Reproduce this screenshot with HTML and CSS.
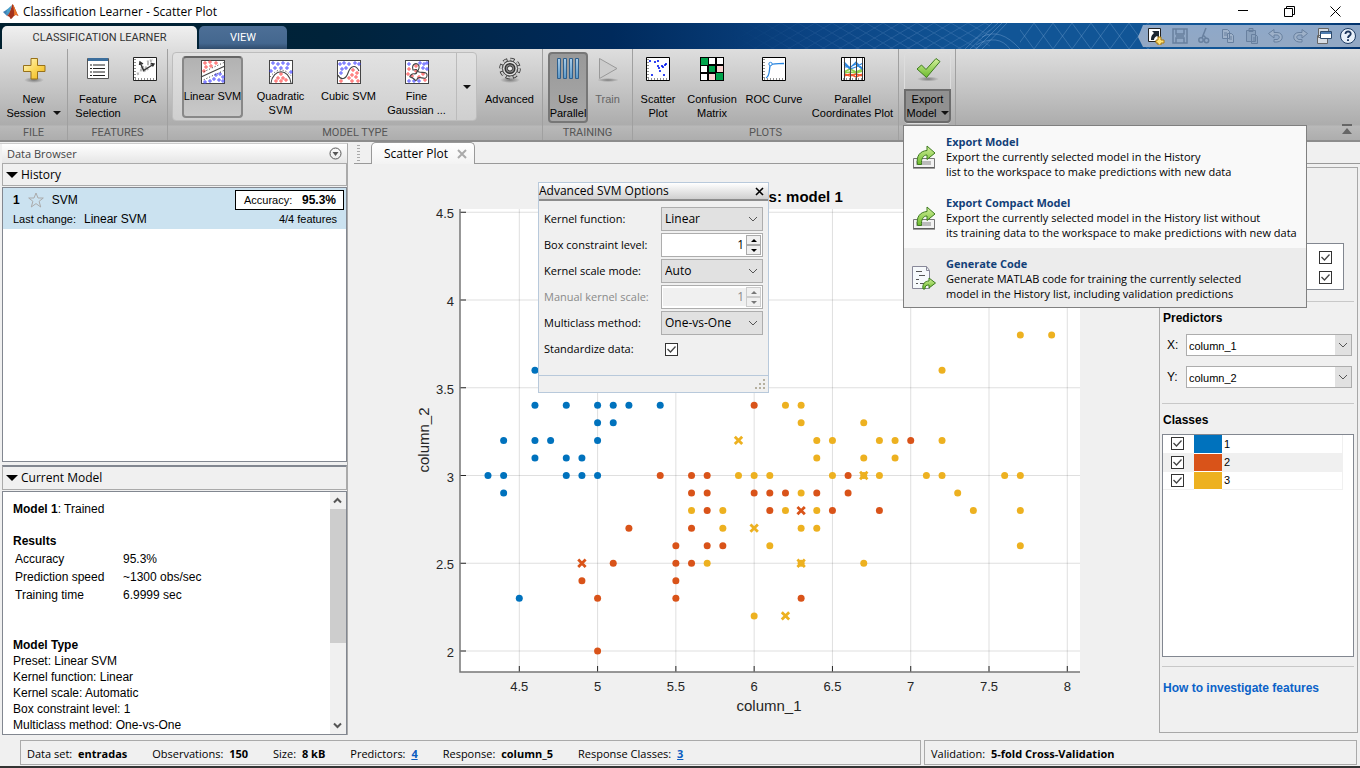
FILE: index.html
```html
<!DOCTYPE html>
<html lang="en">
<head>
<meta charset="utf-8">
<title>Classification Learner - Scatter Plot</title>
<link rel="stylesheet" href="styles.css">
</head>
<body>
<svg class="defs" aria-hidden="true">
  <defs>
    <linearGradient id="gold" x1="0" y1="0" x2="1" y2="1"><stop offset="0" stop-color="#fffbd0"/><stop offset=".5" stop-color="#fbd85c"/><stop offset="1" stop-color="#eeb211"/></linearGradient>
    <linearGradient id="green" x1="0" y1="0" x2="0" y2="1"><stop offset="0" stop-color="#d3f09b"/><stop offset="1" stop-color="#6cbb2c"/></linearGradient>
    <linearGradient id="bar" x1="0" y1="0" x2="0" y2="1"><stop offset="0" stop-color="#a9cdea"/><stop offset="1" stop-color="#5b97c6"/></linearGradient>
    <radialGradient id="shade"><stop offset="0" stop-color="#000" stop-opacity=".4"/><stop offset="1" stop-color="#000" stop-opacity="0"/></radialGradient>
    <pattern id="net" width="19" height="26" patternUnits="userSpaceOnUse"><path d="M0 0L19 26M19 0L0 26" stroke="#8fb5df" stroke-opacity=".28" fill="none"/></pattern>
    <pattern id="mesh" width="17" height="10" patternUnits="userSpaceOnUse"><path d="M0 0L17 10M17 0L0 10" stroke="#8fb5df" stroke-opacity=".2" fill="none"/></pattern>
    <linearGradient id="fade"><stop offset="0" stop-color="#000"/><stop offset=".7" stop-color="#fff"/></linearGradient>
    <mask id="fademask"><rect width="260" height="26" fill="url(#fade)"/></mask>
  </defs>
</svg>

<header class="titlebar">
  <svg class="logo" width="17" height="17" viewBox="0 0 17 17"><path d="M1 9l5-3 3 2-4 5z" fill="#3e7fb5"/><path d="M5 6.500L10 2l-2 7-4 3z" fill="#4b9fc9"/><path d="M5 13C8 11 9 5 10.500 1c1.500 1 3.500 8 6 12-2-1-3-1.500-4.500 0-1.500 1.500-2 3-3.500 3-.5-2-1.500-3-3.500-3z" fill="#a3321c"/><path d="M10.500 1c1.500 1 3.500 8 6 12-2-1-3-1.500-4.500 0 .5-4-.5-9-1.500-12z" fill="#e8742a"/></svg>
  <h1>Classification Learner - Scatter Plot</h1>
  <div class="window-buttons">
    <button aria-label="Minimize"><svg width="11" height="11"><path d="M0 4.500h10" stroke="#000"/></svg></button>
    <button aria-label="Restore"><svg width="11" height="11" fill="none" stroke="#000"><path d="M.5 2.500h8v8h-8zM2.500 2.500v-2h8v8h-2"/></svg></button>
    <button aria-label="Close"><svg width="11" height="11" stroke="#000"><path d="M.5.5l10 10M10.500.5l-10 10"/></svg></button>
  </div>
</header>

<nav class="banner">
  <button class="tab tab-active">CLASSIFICATION LEARNER</button>
  <button class="tab">VIEW</button>
  <svg class="banner-art" width="430" height="26" aria-hidden="true">
    <rect width="260" height="26" fill="url(#mesh)" mask="url(#fademask)"/>
    <rect x="290" width="140" height="26" fill="url(#net)"/>
    <path d="M240 26L268 0M246 26L272 0M252 26L277 0M235 26L262 0M252 14q18-10 38 12M246 22q22-12 34 4" fill="none" stroke="#8fb5df" stroke-opacity=".35"/>
  </svg>
  <div class="quick">
    <button aria-label="Shortcut"><svg width="18" height="18" viewBox="0 0 18 18"><path d="M1.500 1.500h12v13h-12z" fill="#fff" stroke="#222"/><path d="M4 13c0-4 1-5 3-7L5 4h7v7l-2-2c-2 1-3 2-3 4z" fill="#1c2530"/><path d="M11 10h3v3h3v3h-3v2h-3v-2H9v-3h2z" fill="#ffe277" stroke="#a97910"/></svg></button>
    <button aria-label="Save" disabled><svg width="18" height="18" viewBox="0 0 18 18" fill="none" stroke="#68809f" stroke-width="1.500"><path d="M2 2h14v14H2zM5 2v5h8V2M5 16v-5h8v5M5 9h8"/></svg></button>
    <button aria-label="Cut" disabled><svg width="18" height="18" viewBox="0 0 18 18" fill="none" stroke="#68809f" stroke-width="1.500"><path d="M11 1L7 11M8 8l3 3"/><circle cx="6" cy="13" r="2.200"/><circle cx="11.500" cy="13.500" r="2.200"/></svg></button>
    <button aria-label="Copy" disabled><svg width="18" height="18" viewBox="0 0 18 18" fill="#9eb1c9" stroke="#68809f"><path d="M3.500 2.500h5l2 2v7h-7zM8.500 6.500h4l2 2v7h-6z"/><path d="M5 6h3M5 8h3M10 10h3M10 12h3"/></svg></button>
    <button aria-label="Paste" disabled><svg width="18" height="18" viewBox="0 0 18 18" fill="#8aa1bd" stroke="#68809f"><path d="M3.500 3.500h9v11h-9zM6 1.500h4v3H6zM8.500 7.500h4l2 2v7h-6z"/><path d="M10 11h3M10 13h3"/></svg></button>
    <button aria-label="Undo" disabled><svg width="18" height="18" viewBox="0 0 18 18" fill="#9eb1c9" stroke="#68809f"><path d="M7 2.500v3h3c7 0 7 9 0 9.500H7v-2.500h3c3-.5 3-4 0-4.500H7v3L1.500 6.500z"/></svg></button>
    <button aria-label="Redo" disabled><svg width="18" height="18" viewBox="0 0 18 18" fill="#9eb1c9" stroke="#68809f"><path d="M11 2.500v3H8c-7 0-7 9 0 9.500h3v-2.500H8c-3-.5-3-4 0-4.500h3v3l5.500-4.500z"/></svg></button>
    <button aria-label="Switch windows"><svg width="18" height="18" viewBox="0 0 18 18"><path d="M3.500 1.500h10v9h-10zM2.500 8.500h10v8h-10z" fill="#d7dce3" stroke="#666"/><path d="M5.500 4.500h11v7h-11z" fill="#fff" stroke="#2e4a6b"/><path d="M6 5h10v2H6z" fill="#4f7db0"/></svg></button>
    <button aria-label="Help"><svg width="18" height="18" viewBox="0 0 18 18"><circle cx="9" cy="9" r="7.500" fill="#e8f0fa" stroke="#1d3b63"/><path d="M6.500 7c0-3.500 5.500-3.200 5.200 0C11.500 8.700 9 8.700 9 11M9 12.300v1.700" fill="none" stroke="#1c355c" stroke-width="1.900"/></svg></button>
  </div>
</nav>

<section class="toolstrip" aria-label="Classification Learner tools">
  <div class="group">
    <div class="tools">
      <button class="tool w-file"><svg class="icon" viewBox="0 0 24 24"><ellipse cx="12" cy="23" rx="10" ry="3" fill="url(#shade)"/><path d="M9 1.500h6.500v7H23v6h-7.500V22H9v-7.500H1.500v-6H9z" fill="url(#gold)" stroke="#97711a"/></svg><span>New<br>Session <i class="caret"></i></span></button>
    </div>
    <h2>FILE</h2>
  </div>
  <div class="group">
    <div class="tools">
      <button class="tool w-feature"><svg class="icon" viewBox="0 0 24 24"><path d="M1.500 1.500h21v20h-21z" fill="#fff" stroke="#555"/><path d="M2 1h20v3H2z" fill="#3c6e9c"/><path d="M4 8h2M4 11.500h2M4 15h2M4 18.500h2M7 8h12M7 11.500h12M7 15h12M7 18.500h12" stroke="#222" stroke-width="1.200"/></svg><span>Feature<br>Selection</span></button>
      <button class="tool w-pca"><svg class="icon" viewBox="0 0 24 24"><path d="M.5.5h23v23H.5z" fill="#fff" stroke="#222"/><path d="M4 17l3-1m0-3l5 1m-3-4l6 1m-1-4l5 0m-8 7l5-3m-8-1l3 2m3-7l6-2" stroke="#b5b5b5" stroke-width="2.500" stroke-dasharray="2 1"/><path d="M7 5l3.500 8.500L21 7M6.500 8l.5-3 3 2M18 6.500l3 .5-1.500 2.500" fill="none" stroke="#333" stroke-width="1.400"/><path d="M2 22h20M2 2v20" stroke="#222" stroke-dasharray="1 2"/></svg><span>PCA</span></button>
    </div>
    <h2>FEATURES</h2>
  </div>
  <div class="group">
    <div class="tools">
      <div class="gallery">
        <button class="model model-on"><svg class="icon" viewBox="0 0 24 24" data-model="linear"></svg><span>Linear SVM</span></button>
        <button class="model"><svg class="icon" viewBox="0 0 24 24" data-model="quadratic"></svg><span>Quadratic<br>SVM</span></button>
        <button class="model"><svg class="icon" viewBox="0 0 24 24" data-model="cubic"></svg><span>Cubic SVM</span></button>
        <button class="model"><svg class="icon" viewBox="0 0 24 24" data-model="gauss"></svg><span>Fine<br>Gaussian ...</span></button>
        <button class="more" aria-label="More models"><i class="caret"></i></button>
      </div>
      <button class="tool w-adv"><svg class="icon" viewBox="0 0 24 24"><ellipse cx="12" cy="23" rx="10" ry="3" fill="url(#shade)"/><circle cx="12" cy="11.500" r="9" fill="none" stroke="#333" stroke-width="3.600" stroke-dasharray="4.200 2.870"/><circle cx="12" cy="11.500" r="9" fill="none" stroke="#ccc" stroke-width="2" stroke-dasharray="3.400 3.670"/><circle cx="12" cy="11.500" r="7.500" fill="#ddd" stroke="#444"/><circle cx="12" cy="11.500" r="4.800" fill="#888" stroke="#333" stroke-width="1.500"/><circle cx="12" cy="11.500" r="2.600" fill="#eee" stroke="#333"/></svg><span>Advanced</span></button>
    </div>
    <h2>MODEL TYPE</h2>
  </div>
  <div class="group">
    <div class="tools tools-training">
      <button class="tool w-use tool-on" aria-pressed="true"><svg class="icon" viewBox="0 0 24 24"><path d="M1.500 1.500h3v20h-3zM7.500 1.500h3v20h-3zM13.500 1.500h3v20h-3zM19.500 1.500h3v20h-3z" fill="url(#bar)" stroke="#2f5f8c"/></svg><span>Use<br>Parallel</span></button>
      <button class="tool w-train" disabled><svg class="icon" viewBox="0 0 24 24"><ellipse cx="12" cy="23" rx="11" ry="2" fill="url(#shade)"/><path d="M3.500 1.500v20L21 11.500z" fill="#ccc" stroke="#999"/></svg><span>Train</span></button>
    </div>
    <h2>TRAINING</h2>
  </div>
  <div class="group">
    <div class="tools">
      <button class="tool w-scatter"><svg class="icon" viewBox="0 0 24 24"><path d="M.5.5h23v23H.5z" fill="#fff" stroke="#000"/><path d="M2 22h20M2 2v20" stroke="#222" stroke-dasharray="1 2"/><path d="M4 4h0M9 5h0M12 4h0M16 9h0M12 9h0M14 14h0M19 8h0M17 10h0M13 11h0M6 18h0M18 18h0M20 7h0" stroke="#0018ee" stroke-width="2.200" stroke-linecap="round"/></svg><span>Scatter<br>Plot</span></button>
      <button class="tool w-conf"><svg class="icon" viewBox="0 0 24 24"><path d="M0 0h24v24H0z" fill="#000"/><path d="M9 1h6v6H9zM17 1h6v6h-6zM1 9h6v6H1zM1 17h6v6H1z" fill="#fff"/><path d="M1 1h7v7H1zM9 9h6v6H9zM16 16h7v7h-7z" fill="#00a44c"/><path d="M17 9h6v6h-6zM9 17h6v6H9z" fill="#fcd5d2"/></svg><span>Confusion<br>Matrix</span></button>
      <button class="tool w-roc"><svg class="icon" viewBox="0 0 24 24"><path d="M.5.5h23v23H.5z" fill="#fff" stroke="#000"/><path d="M2 22h20M2 2v20" stroke="#222" stroke-dasharray="1 2"/><path d="M4 21c4-2 3-7 4-12 0-3 8-2 14-2.500" fill="none" stroke="#2a86e0" stroke-width="1.300"/><circle cx="8.500" cy="7" r="1.700" fill="#fff" stroke="#2a86e0"/></svg><span>ROC Curve</span></button>
      <button class="tool w-coord"><svg class="icon" viewBox="0 0 24 24"><path d="M.5.5h23v23H.5z" fill="#fff" stroke="#000"/><path d="M2 22h20" stroke="#222" stroke-dasharray="1 2"/><path d="M3 15l6-3 6 3 7-3M3 16l6-1 6 1 7-2" stroke="#8fd14a" fill="none" stroke-width="1.600"/><path d="M3 5l6 6 6-6 7 7M3 10l6 0 6-3 7 6M3 7l6 5 6-2 7-4" stroke="#2a86e0" fill="none" stroke-width="1.200"/><path d="M3 19l6-2 6 3 7-3M3 17l6 2 6-2 7 2" stroke="#f5572b" fill="none" stroke-width="1.500"/><path d="M3.500 1v22M9.500 1v22M15.500 1v22M21.500 1v22" stroke="#444"/></svg><span>Parallel<br>Coordinates Plot</span></button>
    </div>
    <h2>PLOTS</h2>
  </div>
  <div class="group group-export">
    <div class="tools tools-export">
      <button class="tool w-export" aria-expanded="true"><svg class="icon" viewBox="0 0 24 24"><ellipse cx="12" cy="22" rx="11" ry="2.500" fill="url(#shade)"/><path d="M1 12l4.500-4L10 12.500 20 1.500l4 3L10.500 20.500z" fill="url(#green)" stroke="#3d7a1e"/></svg><span>Export<br>Model <i class="caret"></i></span></button>
    </div>
    <h2></h2>
    <div class="menu" role="menu">
      <button role="menuitem"><svg width="24" height="24" viewBox="0 0 24 24"><path d="M1.500 13.500v9h21v-9z" fill="#f2f2f2" stroke="#777"/><path d="M1 23h22" stroke="#444"/><path d="M4 16h15v4H4z" fill="#bbb"/><path d="M5.500 19.500C4 11 8 6 15 5.500V1l8 7-8 6.500V10c-4 0-6 4-5.500 9.500z" fill="url(#green)" stroke="#3d7a1e"/></svg><span><b>Export Model</b><br>Export the currently selected model in the History<br>list to the workspace to make predictions with new data</span></button>
      <button role="menuitem"><svg width="24" height="24" viewBox="0 0 24 24"><path d="M1.500 13.500v9h21v-9z" fill="#f2f2f2" stroke="#777"/><path d="M1 23h22" stroke="#444"/><path d="M4 16h15v4H4z" fill="#bbb"/><path d="M5.500 19.500C4 11 8 6 15 5.500V1l8 7-8 6.500V10c-4 0-6 4-5.500 9.500z" fill="url(#green)" stroke="#3d7a1e"/></svg><span><b>Export Compact Model</b><br>Export the currently selected model in the History list without<br>its training data to the workspace to make predictions with new data</span></button>
      <button role="menuitem" class="hover"><svg width="24" height="24" viewBox="0 0 24 24"><path d="M.5.5h14l3 4v18H.5z" fill="#f6f9fb" stroke="#889"/><path d="M14.500.5v4h3" fill="none" stroke="#889"/><path d="M4 5.500h6M7 9.500h6M4 13.500h3M8 17.500h4M4 17.500h2" stroke="#555" stroke-width="1.200"/><path d="M11 23c-1-5 2-8 6-8v-3l6.500 5-6.500 5v-3c-3 0-4 1-4 4z" fill="url(#green)" stroke="#3d7a1e"/></svg><span><b>Generate Code</b><br>Generate MATLAB code for training the currently selected<br>model in the History list, including validation predictions</span></button>
    </div>
  </div>
  <button class="collapse" aria-label="Collapse toolstrip"><svg width="12" height="12"><path d="M1 1h10v2H1zM1 11l5-6 5 6z" fill="#666"/></svg></button>
</section>

<main class="workspace">
  <aside class="browser">
    <div class="browser-head"><h2>Data Browser</h2><button aria-label="Data Browser actions"><svg width="13" height="13"><circle cx="6.500" cy="6.500" r="5.500" fill="none" stroke="#555"/><path d="M3.500 5h6l-3 4z" fill="#555"/></svg></button></div>
    <button class="fold"><i class="tri"></i>History</button>
    <ul class="history">
      <li>
        <div class="hist-row"><b>1</b><svg width="16" height="16" viewBox="0 0 16 16"><path d="M8 1l2 5h5.300l-4.200 3.300L12.700 15 8 11.600 3.300 15l1.600-5.700L.7 6H6z" fill="none" stroke="#aaa"/></svg><span class="hist-name">SVM</span><span class="score">Accuracy: <b>95.3%</b></span></div>
        <div class="hist-row hist-sub"><span>Last change:</span><span class="hist-change">Linear SVM</span><span class="hist-features">4/4 features</span></div>
      </li>
    </ul>
    <button class="fold fold-model"><i class="tri"></i>Current Model</button>
    <div class="current">
      <div class="report">
        <p><b>Model 1</b>: Trained</p>
        <h3>Results</h3>
        <table>
          <tr><td>Accuracy</td><td>95.3%</td></tr>
          <tr><td>Prediction speed</td><td>~1300 obs/sec</td></tr>
          <tr><td>Training time</td><td>6.9999 sec</td></tr>
        </table>
        <h3 class="type-head">Model Type</h3>
        <p>Preset: Linear SVM<br>Kernel function: Linear<br>Kernel scale: Automatic<br>Box constraint level: 1<br>Multiclass method: One-vs-One</p>
      </div>
      <div class="scroll"><svg width="15" height="17"><path d="M4 10.500L7.500 7l3.500 3.500" fill="none" stroke="#555" stroke-width="2"/></svg><div class="thumb"></div><svg width="15" height="17"><path d="M4 6.500L7.500 10 11 6.500" fill="none" stroke="#555" stroke-width="2"/></svg></div>
    </div>
  </aside>

  <section class="document">
    <div class="doc-tabs">
      <i class="grip"></i>
      <div class="doc-tab"><span>Scatter Plot</span><button aria-label="Close tab"><svg width="10" height="10"><path d="M1 1l8 8M9 1l-8 8" stroke="#aaa" stroke-width="2"/></svg></button></div>
      <div class="doc-rest"></div>
    </div>
    <div class="doc-body">
      <div class="plot">
        <svg id="chart" viewBox="0 0 805 573" role="img" aria-label="Predictions: model 1"></svg>
        <form class="dialog" aria-label="Advanced SVM Options">
          <div class="dialog-head"><span>Advanced SVM Options</span><button type="button" aria-label="Close dialog"><svg width="9" height="9"><path d="M1 1l7 7M8 1l-7 7" stroke="#000" stroke-width="1.600"/></svg></button></div>
          <div class="fields">
            <label for="kf">Kernel function:</label><select id="kf" class="combo"><option>Linear</option></select>
            <label for="bc">Box constraint level:</label><div class="spin"><input id="bc" type="text" value="1"><div class="steps"><button type="button" aria-label="Increase"><i class="up"></i></button><button type="button" aria-label="Decrease"><i class="down"></i></button></div></div>
            <label for="ks">Kernel scale mode:</label><select id="ks" class="combo"><option>Auto</option></select>
            <label for="mk" class="off">Manual kernel scale:</label><div class="spin spin-off"><input id="mk" type="text" value="1" disabled><div class="steps"><button type="button" aria-label="Increase" disabled><i class="up"></i></button><button type="button" aria-label="Decrease" disabled><i class="down"></i></button></div></div>
            <label for="mm">Multiclass method:</label><select id="mm" class="combo"><option>One-vs-One</option></select>
            <label for="sd">Standardize data:</label><input id="sd" class="check check-field" type="checkbox" checked>
          </div>
          <div class="dialog-foot"><svg width="11" height="11" fill="#b5b09f"><path d="M8 0h2v2H8zM8 4h2v2H8zM8 8h2v2H8zM4 4h2v2H4zM4 8h2v2H4zM0 8h2v2H0z"/></svg></div>
        </form>
      </div>
      <aside class="controls">
        <div class="data-box"><input class="check" type="checkbox" checked aria-label="Correct"><input class="check" type="checkbox" checked aria-label="Incorrect"></div>
        <hr>
        <h3>Predictors</h3>
        <div class="axis-row"><label for="px">X:</label><select id="px" class="combo combo-white"><option>column_1</option></select></div>
        <div class="axis-row"><label for="py">Y:</label><select id="py" class="combo combo-white"><option>column_2</option></select></div>
        <hr class="hr-classes">
        <h3>Classes</h3>
        <div class="classes">
          <table>
            <tr><td><input id="c1" class="check" type="checkbox" checked></td><td class="swatch blue"></td><td><label for="c1">1</label></td></tr>
            <tr><td><input id="c2" class="check" type="checkbox" checked></td><td class="swatch red"></td><td><label for="c2">2</label></td></tr>
            <tr><td><input id="c3" class="check" type="checkbox" checked></td><td class="swatch gold"></td><td><label for="c3">3</label></td></tr>
          </table>
        </div>
        <hr class="hr-link">
        <a class="how" href="#features">How to investigate features</a>
      </aside>
    </div>
  </section>
</main>

<footer class="status">
  <div class="status-main"><span>Data set: <b>entradas</b></span><span>Observations: <b>150</b></span><span>Size: <b>8 kB</b></span><span>Predictors: <a href="#predictors">4</a></span><span>Response: <b>column_5</b></span><span>Response Classes: <a href="#classes">3</a></span></div>
  <div class="status-side">Validation: <b>5-fold Cross-Validation</b></div>
</footer>
<script src="chart.js"></script>
</body>
</html>
```
FILE: styles.css
```css
* { box-sizing: border-box; }
html, body { height: 100%; }
body { margin: 0; display: flex; flex-direction: column; background: #f0f0f0; color: #000; font: 12px/16px "Open Sans", "Noto Sans", sans-serif; overflow: hidden; border-bottom: 2px solid #333; }
button { font: inherit; color: inherit; border: 0; padding: 0; background: none; }
h1, h2, h3, p, ul { margin: 0; padding: 0; font: inherit; list-style: none; }
svg { display: block; flex: none; }
.defs { position: absolute; width: 0; height: 0; }

.titlebar { flex: none; display: flex; align-items: center; height: 23px; padding: 0 19px 0 2px; gap: 4px; background: #fff; }
.titlebar h1 { flex: 1; font-size: 12px; }
.window-buttons { display: flex; gap: 35px; }

.banner { position: relative; flex: none; display: flex; align-items: flex-end; gap: 2px; height: 26px; padding-left: 2px; background: linear-gradient(90deg, #00202f 0%, #00233a 24%, #002a5c 45%, #0b4484 60%, #115596 72%, #115596 94%, #00306a 100%); }
.tab { position: relative; z-index: 1; height: 23px; border-radius: 5px 5px 0 0; width: 88px; background: linear-gradient(#4d6f96, #44678f 75%, #304c6c); color: #fff; font: 11px/16px Roboto, "Liberation Sans", sans-serif; }
.tab-active { width: 195px; background: linear-gradient(#f0f0f0, #dedede); color: #333; }
.banner-art { position: absolute; right: 200px; top: 0; }
.quick { position: relative; display: flex; align-items: center; gap: 6px; height: 22px; margin: 0 0 2px auto; padding: 0 3px 0 9px; background: linear-gradient(#8ea8c9, #93a8c3); clip-path: polygon(5px 0, 100% 0, 100% 100%, 5px 100%, 0 55%); }

.toolstrip { position: relative; flex: none; display: flex; height: 93px; background: linear-gradient(#dedede 0, #c4c4c4 45%, #acacac 76px, #b9b9b9 77px, #adadad 100%); border-bottom: 2px solid #8c8c8c; font: 11px/14px "Liberation Sans", Arial, sans-serif; }
.group { position: relative; display: flex; flex-direction: column; border-right: 1px solid #a0a0a0; }
.group h2 { height: 14px; line-height: 14px; text-align: center; color: #555; font-family: Roboto, "Liberation Sans", sans-serif; }
.tools { flex: 1; display: flex; align-items: flex-start; }
.tool { display: flex; flex-direction: column; align-items: center; gap: 11px; padding-top: 8px; }
.tool:disabled { color: #666; }
.icon { width: 24px; height: 24px; overflow: visible; }
.caret { display: inline-block; margin-left: 4px; border: 4px solid transparent; border-top-color: #111; border-bottom: 0; vertical-align: 2px; }
.w-file { width: 67px; }
.w-feature { width: 60px; }
.w-pca { width: 34px; margin-right: 5px; }
.gallery { display: flex; align-items: stretch; height: 69px; margin: 3px 0 0 4px; padding-left: 9px; background: linear-gradient(#e2e2e2, #cfcfcf); border: 1px solid #bdbdbd; border-radius: 4px; }
.model { display: flex; flex-direction: column; align-items: center; gap: 5px; width: 61px; height: 62px; margin: 3px 7px 0 0; padding-top: 3px; border: 1px solid transparent; white-space: nowrap; }
.model-on { border: 2px solid #888; border-top-color: #666; border-radius: 4px; background: linear-gradient(#b2b2b2, #c9c9c9); padding-top: 2px; }
.more { width: 20px; margin-left: 2px; border-left: 1px solid #bbb; }
.more .caret { margin: 0; }
.w-adv { width: 65px; }
.tools-training { padding: 3px 6px 0 5px; }
.w-use { width: 40px; height: 71px; margin-right: 1px; padding-top: 3px; border: 2px solid #777; border-radius: 4px; background: linear-gradient(#999, #a8a8a8); }
.w-train { width: 37px; padding-top: 5px; }
.w-scatter { width: 50px; }
.w-conf { width: 58px; }
.w-roc { width: 66px; }
.w-coord { width: 91px; }
.tools-export { padding: 3px 4px 0 5px; }
.w-export { width: 47px; height: 72px; border: 1px solid #ddd; border-radius: 4px; padding-top: 4px; gap: 8px; }
.w-export span { width: 47px; height: 34px; padding-top: 1px; border: 2px solid #6c6c6c; border-radius: 0 0 4px 4px; background: #919191; }
.w-export .caret { margin-left: 1px; }
.collapse { position: absolute; right: 7px; bottom: 5px; }

.menu { position: absolute; z-index: 5; left: 4px; top: 76px; width: 404px; background: #f9f9f9; border: 1px solid #808080; font: 11px/15px "Open Sans", "Noto Sans", sans-serif; white-space: nowrap; }
.menu button { display: flex; align-items: center; gap: 10px; width: 100%; height: 61px; padding-left: 8px; text-align: left; }
.menu b { color: #123f78; }
.menu .hover { background: #ececec; height: 59px; padding-top: 1px; }

.workspace { flex: 1; min-height: 0; display: flex; gap: 6px; }
.browser { width: 348px; flex: none; display: flex; flex-direction: column; margin: 1px 0 2px; padding-left: 2px; border-top: 1px solid #ccc; border-right: 1px solid #aaa; background: #f0f0f0; }
.browser-head { display: flex; align-items: center; justify-content: space-between; height: 19px; padding: 0 5px; background: linear-gradient(#fff, #e6e6e6); color: #444; font-size: 11px; }
.fold { display: flex; flex: none; align-items: center; gap: 3px; height: 23px; padding-left: 3px; border: 1px solid #aaa; background: #f0f0f0; }
.tri { border: 6px solid transparent; border-top: 6px solid #000; border-bottom: 0; }
.history { flex: 1; margin-top: 1px; border: 1px solid #828790; background: #fff; }
.history li { height: 41px; padding: 2px 2px 0 10px; background: #cbe2f0; font: 12px/16px "Liberation Sans", Arial, sans-serif; }
.hist-row { display: flex; align-items: center; height: 20px; }
.hist-row > svg { margin: 0 8px; }
.score { display: flex; justify-content: space-between; align-items: center; width: 109px; height: 20px; margin-left: auto; padding: 0 7px 0 8px; border: 1px solid #000; background: #fff; font-size: 11px; }
.score b { font-size: 12px; }
.hist-sub { height: 18px; font-size: 11px; }
.hist-change { margin-left: 8px; font-size: 12px; }
.hist-features { margin: 0 7px 0 auto; }
.fold-model { height: 25px; margin-top: 3px; border-top: 2px solid #828790; }
.current { flex: none; display: flex; height: 244px; margin-top: 1px; border: 1px solid #828790; background: #fff; overflow: hidden; }
.report { flex: 1; padding: 9px 10px 0; font: 12px/16px "Liberation Sans", Arial, sans-serif; }
.report h3 { margin-top: 16px; font-weight: bold; }
.report table { border-spacing: 0; margin: 1px 0 0 2px; }
.report td { padding: 1px 0; line-height: 16px; }
.report td:first-child { width: 108px; }
.report .type-head { margin-top: 33px; }
.scroll { width: 16px; display: flex; flex-direction: column; background: #f0f0f0; }
.thumb { height: 134px; margin-bottom: auto; background: #cdcdcd; }

.document { flex: 1; min-width: 0; display: flex; flex-direction: column; }
.doc-tabs { display: flex; height: 22px; flex: none; }
.grip { width: 17px; border-bottom: 1px solid #999; background: repeating-linear-gradient(#aaa 0 1px, transparent 1px 3px) 3px 3px / 3px 16px no-repeat; }
.doc-tab { display: flex; align-items: center; justify-content: space-between; width: 104px; padding: 0 7px 0 12px; border: 1px solid #999; border-bottom: 0; border-radius: 5px 5px 0 0; background: linear-gradient(#fff, #f3f3f3); }
.doc-rest { flex: 1; border-bottom: 1px solid #999; }
.doc-body { flex: 1; min-height: 0; display: flex; }
.plot { position: relative; flex: 1; min-width: 0; }
#chart { width: 100%; height: 100%; }
#chart text { font-family: "Liberation Sans", Arial, sans-serif; fill: #262626; }
.tick { font-size: 13px; }
.axis-name { font-size: 15px; }
#chart .chart-title { font-size: 15px; font-weight: bold; fill: #000; }

.dialog { position: absolute; left: 184px; top: 18px; width: 231px; border: 1px solid #b8c9db; background: #f0f0f0; }
.dialog-head { display: flex; justify-content: space-between; align-items: center; height: 18px; padding-right: 4px; border-bottom: 2px solid #8c8c8c; background: linear-gradient(#fff, #cfcfcf); }
.fields { display: grid; grid-template-columns: 117px 102px; grid-auto-rows: 24px; row-gap: 2px; align-items: center; padding: 6px 5px 14px; }
.fields label { font-size: 11px; }
.off { color: #8a8a8a; }
.combo { appearance: none; width: 100%; height: 24px; padding: 0 3px; border: 1px solid #adadad; border-radius: 0; color: #000; font: inherit; background: #e1e1e1 url("data:image/svg+xml,%3Csvg xmlns='http://www.w3.org/2000/svg' width='10' height='6'%3E%3Cpath d='M1 1l4 4 4-4' fill='none' stroke='%23555'/%3E%3C/svg%3E") right 4px center no-repeat; }
.spin { display: flex; height: 24px; padding: 1px; border: 1px solid #adadad; background: #fff; }
.spin input { flex: 1; min-width: 0; border: 0; padding: 0 2px; text-align: right; font: inherit; background: none; }
.spin-off input { background: #f0f0f0; color: #8a8a8a; margin: 1px 0; }
.steps { display: flex; flex-direction: column; width: 15px; }
.steps button { flex: 1; display: flex; align-items: center; justify-content: center; border: 1px solid #aaa; background: #f0f0f0; }
.up, .down { border: 3px solid transparent; }
.up { border-top: 0; border-bottom-color: #000; }
.down { border-bottom: 0; border-top-color: #000; }
.steps button:disabled { border-color: #ccc; }
.spin-off .up { border-bottom-color: #777; }
.spin-off .down { border-top-color: #777; }
.check { appearance: none; display: block; width: 13px; height: 13px; margin: 0; border: 1px solid #333; background: #fff url("data:image/svg+xml,%3Csvg xmlns='http://www.w3.org/2000/svg' width='11' height='11'%3E%3Cpath d='M1.500 5l3 3 5-5.500' fill='none' stroke='%23444' stroke-width='1.300'/%3E%3C/svg%3E") center no-repeat; }
.check-field { margin-left: 4px; }
.dialog-foot { display: flex; justify-content: flex-end; align-items: flex-end; height: 17px; padding: 0 2px 2px; border-top: 1px solid #b8c9db; }

.controls { width: 199px; flex: none; display: flex; flex-direction: column; margin: 3px 2px 4px 0; padding: 0 3px 0 2px; border: 1px solid #a8a8a8; font: 11px/16px "Liberation Sans", Arial, sans-serif; }
.controls hr { width: 100%; margin: 0; border: 0; border-top: 1px solid #c8c8c8; }
.data-box { flex: none; display: flex; flex-direction: column; gap: 7px; align-items: flex-end; margin: 75px 10px 11px 0; padding: 7px 11px 5px; border: 1px solid #828790; background: #fff; }
.controls h3 { margin: 8px 0 8px 1px; font-size: 12px; font-weight: bold; }
.axis-row { display: flex; align-items: center; margin: 0 2px 10px 5px; }
.axis-row label { width: 19px; flex: none; font-size: 12px; }
.combo-white { height: 22px; padding: 1px 2px 0; background-color: #fff; background-image: url("data:image/svg+xml,%3Csvg xmlns='http://www.w3.org/2000/svg' width='16' height='20'%3E%3Cpath d='M0 0h16v20H0z' fill='%23e1e1e1'/%3E%3Cpath d='M4 8l4 4 4-4' fill='none' stroke='%23555'/%3E%3C/svg%3E"); background-position: right 0 center; }
.controls .hr-classes { margin-top: 5px; }
.controls .hr-classes + h3 { margin-bottom: 6px; }
.classes { flex: none; height: 223px; border: 1px solid #828790; background: #fff; }
.classes table { width: 180px; border-collapse: collapse; }
.classes tr { height: 18px; }
.classes tr:nth-child(2) { background: #f0f0f0; }
.classes td { padding: 0 0 0 2px; border-bottom: 1px solid #f0f0f0; line-height: 16px; }
.classes td:last-child { border-right: 1px solid #f0f0f0; }
.classes td:first-child { width: 31px; padding-left: 8px; }
.classes .swatch { width: 28px; border-bottom-color: #fff; }
.blue { background: #0072bd; }
.red { background: #d95319; }
.gold { background: #edb120; }
.controls .hr-link { margin-top: 9px; }
.how { margin: 13px 0 0 1px; color: #0a62c8; font-size: 12px; font-weight: bold; text-decoration: none; white-space: nowrap; }

.status { flex: none; display: flex; gap: 3px; height: 25px; margin: 3px 3px 1px 20px; }
.status > div { display: flex; align-items: center; border: 1px solid #aaa; padding: 2px 6px 0; font-size: 11px; white-space: pre; }
.status .status-main { flex: 1; gap: 25px; }
.status-side { width: 433px; }
.status b, .status a { margin-left: 3px; }
.status a { color: #0a5cc0; font-weight: bold; }
```
FILE: chart.js
```js
const NS = "http://www.w3.org/2000/svg";
function add(parent, name, attrs, text) {
  const el = document.createElementNS(NS, name);
  for (const key in attrs) el.setAttribute(key, attrs[key]);
  if (text !== undefined) el.textContent = text;
  parent.appendChild(el);
  return el;
}

// Scatter chart
const chart = document.getElementById("chart");
const left = 106, right = 726, top0 = 45, bottom = 508;
const px = v => 165.3 + (v - 4.5) * 156.57;
const py = v => 487 - (v - 2) * 175.5;
add(chart, "rect", { x: left, y: top0, width: right - left, height: bottom - top0, fill: "#fff" });
for (let v = 4.5; v <= 8; v += 0.5) {
  const x = px(v);
  add(chart, "path", { d: `M${x} ${top0}V${bottom}`, stroke: "#262626", "stroke-opacity": 0.15 });
  add(chart, "path", { d: `M${x} ${bottom}v-6`, stroke: "#262626" });
  add(chart, "text", { x: x, y: 527, "text-anchor": "middle", class: "tick" }, v);
}
for (let v = 2; v <= 4.5; v += 0.5) {
  const y = py(v);
  add(chart, "path", { d: `M${left} ${y}H${right}`, stroke: "#262626", "stroke-opacity": 0.15 });
  add(chart, "path", { d: `M${left} ${y}h6`, stroke: "#262626" });
  add(chart, "text", { x: 100, y: y + 6, "text-anchor": "end", class: "tick" }, v);
}
add(chart, "path", { d: `M${left} ${top0}V${bottom}H${right}`, fill: "none", stroke: "#777", "stroke-width": 1.5 });
add(chart, "text", { x: 415, y: 38, "text-anchor": "middle", class: "chart-title" }, "Predictions: model 1");
add(chart, "text", { x: 415, y: 547, "text-anchor": "middle", class: "axis-name" }, "column_1");
add(chart, "text", { transform: "translate(75 276) rotate(-90)", "text-anchor": "middle", class: "axis-name" }, "column_2");

const series = [
  { color: "#0072bd", wrong: [],
    right: [[4.6,3.6],[4.6,3.4],[4.8,3.4],[5,3.4],[5.1,3.4],[5.2,3.4],[5.4,3.4],[5,3.3],[5.1,3.3],[4.4,3.2],[4.6,3.2],[4.7,3.2],[5,3.2],[4.6,3.1],[4.8,3.1],[4.9,3.1],[4.3,3],[4.4,3],[4.8,3],[4.9,3],[5,3],[4.4,2.9],[4.5,2.3]] },
  { color: "#d95319", wrong: [[4.9,2.5],[6.3,2.8]],
    right: [[5.4,3],[5.6,3],[5.7,3],[5.6,2.9],[5.7,2.9],[5.7,2.8],[5.2,2.7],[5.6,2.7],[5.5,2.6],[5.7,2.6],[5.8,2.6],[5.1,2.5],[5.5,2.5],[5.6,2.5],[4.9,2.4],[5.5,2.4],[5,2.3],[5.5,2.3],[5,2],[6,3.4],[7,3.2],[6.6,3],[6,2.9],[6.1,2.9],[6.2,2.9],[6.4,2.9],[6.6,2.9],[6.1,2.8],[6.5,2.8],[6.8,2.8],[6.3,2.3]] },
  { color: "#edb120", wrong: [[5.9,3.2],[6.7,3],[6,2.7],[6.3,2.5],[6.2,2.2]],
    right: [[5.6,2.8],[5.8,2.8],[5.8,2.7],[5.7,2.5],[5.9,3],[7.7,3.8],[7.9,3.8],[7.2,3.6],[6.2,3.4],[6.3,3.4],[6.3,3.3],[6.7,3.3],[6.4,3.2],[6.5,3.2],[6.8,3.2],[6.9,3.2],[7.2,3.2],[6.4,3.1],[6.7,3.1],[6.9,3.1],[6,3],[6.1,3],[6.5,3],[6.7,3],[6.8,3],[7.1,3],[7.2,3],[7.6,3],[7.7,3],[6.3,2.9],[7.3,2.9],[6.2,2.8],[6.4,2.8],[7.4,2.8],[7.7,2.8],[6.3,2.7],[6.4,2.7],[6.1,2.6],[7.7,2.6],[6.3,2.5],[6.7,2.5],[6,2.2]] }
];
for (const s of series) {
  for (const [x, y] of s.right) add(chart, "circle", { cx: px(x), cy: py(y), r: 3.5, fill: s.color });
  for (const [x, y] of s.wrong) add(chart, "path", { d: `M${px(x) - 3.7} ${py(y) - 3.7}l7.400 7.400m0 -7.400l-7.400 7.400`, stroke: s.color, "stroke-width": 2.8 });
}

// Gallery thumbnails
const models = {
  linear: { line: "M0 17L24 6", dash: "M0 13L24 2M0 21L24 10", red: [[4,3],[9,2],[5,7],[10,6],[15,3],[3,11]], blue: [[19,14],[15,15],[22,17],[13,19],[18,20],[22,21],[9,21],[4,22]] },
  quadratic: { line: "M2 23C4 8 20 8 22 23", dash: "M1 17Q12 3 23 17", red: [[12,14],[9,18],[14,18],[17,20],[12,21],[7,21]], blue: [[4,3],[9,4],[14,3],[19,4],[6,8],[12,8],[18,8],[22,12],[2,11]] },
  cubic: { line: "M1 15c3 6 8 4 10-2s7-10 11-2", dash: "", red: [[16,10],[20,13],[15,15],[19,17],[12,18],[15,21],[21,21],[4,21]], blue: [[3,4],[7,3],[12,4],[5,9],[9,8],[4,13],[18,3],[22,4]] },
  gauss: { line: "M8 10c-2-7 5-8 6-4s-3 5 0 6 9-1 8 4-7 0-9 2-1 4-4 1-6-1-3-4 5 1 6-3-2-2-4-2z", dash: "", red: [[4,9],[11,6],[11,11],[3,14],[7,16],[18,14],[14,17],[20,20]], blue: [[15,3],[19,4],[22,3],[18,8],[22,9],[4,4],[4,21],[9,21],[14,21]] }
};
for (const svg of document.querySelectorAll("[data-model]")) {
  const m = models[svg.dataset.model];
  add(svg, "rect", { x: 0.5, y: 0.5, width: 23, height: 23, fill: "#fff", stroke: "#444" });
  for (const c of ["red", "blue"]) for (const [x, y] of m[c]) add(svg, "circle", { cx: x, cy: y, r: 1.2, fill: "#fff", stroke: c === "red" ? "#f22" : "#22f", "stroke-width": 0.8 });
  add(svg, "path", { d: m.line, fill: "none", stroke: "#444", "stroke-width": 1.1 });
  if (m.dash) add(svg, "path", { d: m.dash, fill: "none", stroke: "#333", "stroke-dasharray": "1 2" });
}
```
